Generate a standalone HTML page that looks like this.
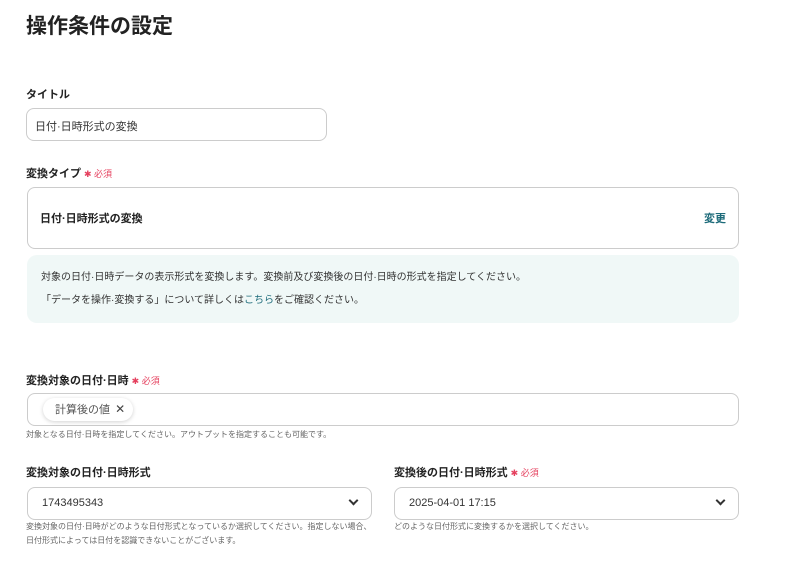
<!DOCTYPE html>
<html><head><meta charset="utf-8"><style>
*{box-sizing:border-box;margin:0;padding:0}
body{width:799px;height:571px;background:#fff;font-family:"Liberation Sans","Noto Sans CJK JP",sans-serif;color:#333;position:relative;overflow:hidden}
.a{position:absolute;white-space:nowrap}
h1{position:absolute;left:26px;top:10px;font-size:21px;font-weight:700;color:#222}
.lab{font-size:11px;font-weight:700;color:#222}
.req{color:#e5405e;font-weight:400;font-size:9px;margin-left:3px}
.box{border:1px solid #ccc;border-radius:8px;background:#fff}
.help{font-size:8px;color:#666;line-height:14px}
.sel{border:1px solid #ccc;border-radius:8px;height:33px;font-size:11px;padding:9px 14px;color:#333}
.chev{position:absolute;right:14px;top:9px;width:7px;height:7px;border-right:2px solid #333;border-bottom:2px solid #333;transform:rotate(45deg)}
</style></head><body>
<h1>操作条件の設定</h1>
<div class="a lab" style="left:26px;top:86px">タイトル</div>
<div class="a box" style="left:26px;top:108px;width:301px;height:33px;font-size:11px;padding:9px 8px">日付·日時形式の変換</div>
<div class="a lab" style="left:26px;top:165px">変換タイプ<span class="req">✱ 必須</span></div>
<div class="a box" style="left:27px;top:187px;width:712px;height:62px"><span class="a lab" style="left:12px;top:22px">日付·日時形式の変換</span><span class="a" style="right:12px;top:22px;font-size:11px;font-weight:700;color:#1d6b7a">変更</span></div>
<div class="a" style="left:27px;top:255px;width:712px;height:68px;background:#f0f8f7;border-radius:10px;font-size:10px;color:#333;padding:11px 14px;line-height:23px">対象の日付·日時データの表示形式を変換します。変換前及び変換後の日付·日時の形式を指定してください。<br>「データを操作·変換する」について詳しくは<span style="color:#1d6b7a">こちら</span>をご確認ください。</div>
<div class="a lab" style="left:26px;top:372px">変換対象の日付·日時<span class="req">✱ 必須</span></div>
<div class="a box" style="left:27px;top:393px;width:712px;height:33px"><div class="a" style="left:15px;top:4px;height:23px;border-radius:12px;background:#fff;box-shadow:0 1px 4px rgba(0,0,0,.18);font-size:11px;color:#555;padding:4px 8px 0 12px;line-height:14px">計算後の値 <span style="font-size:12px;color:#444;margin-left:2px">✕</span></div></div>
<div class="a help" style="left:26px;top:428px">対象となる日付·日時を指定してください。アウトプットを指定することも可能です。</div>
<div class="a lab" style="left:26px;top:464px">変換対象の日付·日時形式</div>
<div class="a sel" style="left:27px;top:487px;width:345px">1743495343<span class="chev"></span></div>
<div class="a help" style="left:26px;top:520px;white-space:normal;width:350px">変換対象の日付·日時がどのような日付形式となっているか選択してください。指定しない場合、日付形式によっては日付を認識できないことがございます。</div>
<div class="a lab" style="left:394px;top:464px">変換後の日付·日時形式<span class="req">✱ 必須</span></div>
<div class="a sel" style="left:394px;top:487px;width:345px">2025-04-01 17:15<span class="chev"></span></div>
<div class="a help" style="left:394px;top:520px">どのような日付形式に変換するかを選択してください。</div>
</body></html>
